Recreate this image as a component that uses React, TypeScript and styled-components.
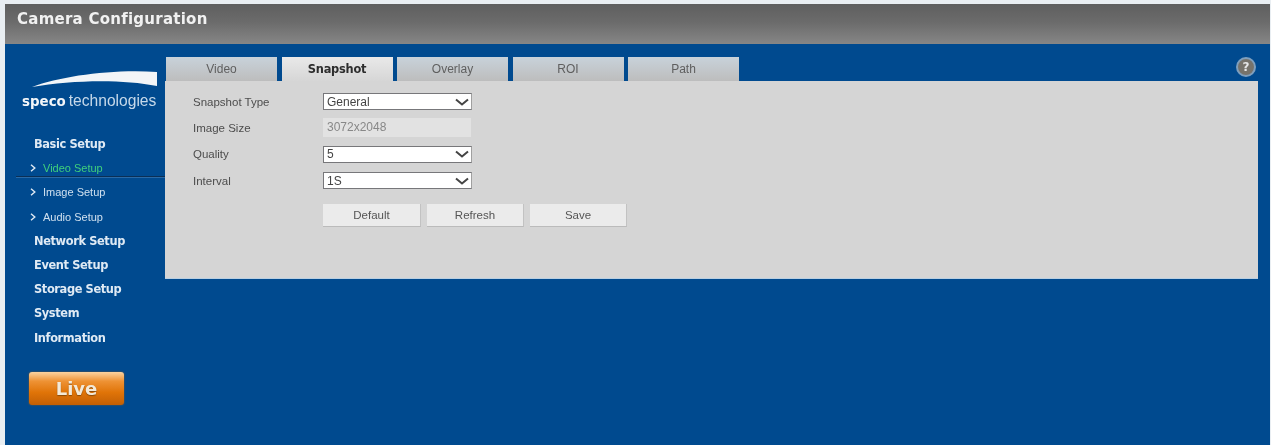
import React from "react";
import styled, { createGlobalStyle } from "styled-components";

const GlobalStyle = createGlobalStyle`
  html, body {
    margin: 0;
    padding: 0;
    background: #e9eef2;
    overflow: hidden;
  }
`;

const Page = styled.div`
  width: 1271px;
  height: 445px;
  box-sizing: border-box;
  padding: 4px 1px 0 5px;
  display: flex;
  flex-direction: column;
  font-family: "Liberation Sans", Arial, sans-serif;
  filter: blur(0.6px);
`;

const Header = styled.header`
  height: 40px;
  flex: none;
  box-sizing: border-box;
  padding: 3px 0 0 12px;
  background: linear-gradient(#5f5f5f 0%, #6b6b6b 45%, #868686 100%);
  color: #f1f1f1;
  font-family: "DejaVu Sans", Verdana, sans-serif;
  font-weight: 700;
  font-size: 15px;
  letter-spacing: 0.25px;
  line-height: 24px;
`;

const Body = styled.div`
  flex: 1;
  display: flex;
  background: #004a8f;
  position: relative;
`;

const Sidebar = styled.aside`
  width: 160px;
  flex: none;
  display: flex;
  flex-direction: column;
  padding-top: 24px;
`;

const Logo = styled.div`
  height: 64px;
  padding-left: 17px;
  display: flex;
  flex-direction: column;
`;

const LogoSwoosh = styled.svg`
  display: block;
  width: 140px;
  height: 25px;
`;

const LogoText = styled.div`
  color: #c6d9ea;
  font-size: 15.6px;
  line-height: 18px;
  margin-top: -1px;
  white-space: nowrap;
  b {
    font-family: "DejaVu Sans", sans-serif;
    font-size: 13.4px;
    margin-right: 3px;
    color: #f3f6f9;
  }
`;

const Nav = styled.nav`
  display: flex;
  flex-direction: column;
`;

const MainItem = styled.div`
  height: 24.2px;
  line-height: 24px;
  padding-left: 29px;
  color: #dfeaf4;
  font-family: "DejaVu Sans", Verdana, sans-serif;
  font-weight: 700;
  font-size: 11.4px;
  letter-spacing: -0.38px;
  white-space: nowrap;
`;

const SubItem = styled.div<{ $active?: boolean }>`
  height: 24.2px;
  display: flex;
  align-items: center;
  gap: 7px;
  padding-left: 25px;
  font-size: 11px;
  color: ${({ $active }) => ($active ? "#3fd07c" : "#cfe0ef")};
  svg {
    flex: none;
    color: #dfeaf4;
  }
`;

const NavDivider = styled.div`
  height: 1px;
  margin: -4px 0 3px 11px;
  background: #0b2f55;
  box-shadow: 0 1px 0 #2a6aa6;
`;

const LiveButton = styled.button`
  width: 95px;
  height: 33px;
  margin: 22px 0 0 24px;
  padding: 0;
  border: none;
  border-radius: 3px;
  background: linear-gradient(#fbd3a0 0%, #ee9234 28%, #e07408 62%, #c25f05 100%);
  box-shadow: 0 0 2px #8f5a1e;
  color: #f3e9d8;
  font-family: "DejaVu Sans", Verdana, sans-serif;
  font-weight: 700;
  font-size: 18px;
  text-shadow: 0 1px 1px #8a4a08;
`;

const Main = styled.main`
  width: 1093px;
  padding-top: 13px;
  display: flex;
  flex-direction: column;
`;

const Tabs = styled.div`
  display: flex;
  gap: 4.5px;
  padding-left: 1px;
  height: 24px;
`;

const Tab = styled.div<{ $active?: boolean }>`
  width: 111px;
  text-align: center;
  line-height: 24px;
  box-sizing: border-box;
  font-size: ${({ $active }) => ($active ? "11.4px" : "12px")};
  letter-spacing: ${({ $active }) => ($active ? "-0.25px" : "0")};
  font-family: ${({ $active }) =>
    $active ? '"DejaVu Sans", Verdana, sans-serif' : '"Liberation Sans", Arial, sans-serif'};
  font-weight: ${({ $active }) => ($active ? 700 : 400)};
  color: ${({ $active }) => ($active ? "#2e2e2e" : "#5f5f5f")};
  background: ${({ $active }) =>
    $active ? "linear-gradient(#e9e9e9, #d6d6d6)" : "linear-gradient(#c8d2da, #bdbdbd)"};
`;

const Panel = styled.section`
  height: 198px;
  box-sizing: border-box;
  padding: 7.5px 0 0 28px;
  background: #d5d5d5;
  border-bottom: 1px solid #b9cfe2;
`;

const FormRow = styled.div`
  height: 26.3px;
  display: flex;
  align-items: center;
`;

const Label = styled.div`
  width: 130px;
  font-size: 11.5px;
  color: #4d4d4d;
`;

const SelectBox = styled.div`
  width: 149px;
  height: 17px;
  box-sizing: border-box;
  padding: 0 2px 0 3px;
  display: flex;
  align-items: center;
  justify-content: space-between;
  background: #fff;
  border: 1px solid #77777a;
  border-right-color: #a0a0a0;
  font-size: 12px;
  color: #444;
`;

const ReadonlyBox = styled.div`
  width: 148px;
  height: 19px;
  box-sizing: border-box;
  padding-left: 4px;
  line-height: 19px;
  background: #e2e2e2;
  font-size: 12px;
  color: #888;
`;

const ButtonRow = styled.div`
  display: flex;
  gap: 6px;
  margin: 10px 0 0 130px;
`;

const ActionButton = styled.button<{ $width: number }>`
  width: ${({ $width }) => $width}px;
  height: 23px;
  padding: 0;
  border: none;
  border-bottom: 1px solid #bbb;
  border-right: 1px solid #c2c2c2;
  background: #ebebeb;
  font-family: "Liberation Sans", Arial, sans-serif;
  font-size: 11.5px;
  color: #555;
`;

const HelpIcon = styled.div`
  position: absolute;
  right: 14px;
  top: 13px;
  width: 20px;
  height: 20px;
  box-sizing: border-box;
  border-radius: 50%;
  border: 2px solid #7f9fbd;
  background: #77736b;
  color: #e6e6e6;
  font-family: "DejaVu Sans", sans-serif;
  font-weight: 700;
  font-size: 12px;
  line-height: 16px;
  text-align: center;
`;

const Chevron = () => (
  <svg width="14" height="8" viewBox="0 0 14 8">
    <path d="M1 1.5 L7 6.5 L13 1.5" fill="none" stroke="#444" strokeWidth="2" />
  </svg>
);

const SubArrow = () => (
  <svg width="6" height="8" viewBox="0 0 6 8">
    <path d="M1 0.8 L4.8 4 L1 7.2" fill="none" stroke="currentColor" strokeWidth="1.4" />
  </svg>
);

const tabs = ["Video", "Snapshot", "Overlay", "ROI", "Path"];

const App: React.FC = () => (
  <>
    <GlobalStyle />
    <Page>
      <Header>Camera Configuration</Header>
      <Body>
        <Sidebar>
          <Logo>
            <LogoSwoosh viewBox="0 0 140 25">
              <path d="M10 19 C40 8 90 1 135 4 L135 18 C100 11 50 12 10 19 Z" fill="#f2f5f8" />
            </LogoSwoosh>
            <LogoText>
              <b>speco</b>technologies
            </LogoText>
          </Logo>
          <Nav>
            <MainItem>Basic Setup</MainItem>
            <SubItem $active>
              <SubArrow />
              Video Setup
            </SubItem>
            <NavDivider />
            <SubItem>
              <SubArrow />
              Image Setup
            </SubItem>
            <SubItem>
              <SubArrow />
              Audio Setup
            </SubItem>
            <MainItem>Network Setup</MainItem>
            <MainItem>Event Setup</MainItem>
            <MainItem>Storage Setup</MainItem>
            <MainItem>System</MainItem>
            <MainItem>Information</MainItem>
          </Nav>
          <LiveButton>Live</LiveButton>
        </Sidebar>
        <Main>
          <Tabs>
            {tabs.map((t) => (
              <Tab key={t} $active={t === "Snapshot"}>
                {t}
              </Tab>
            ))}
          </Tabs>
          <Panel>
            <FormRow>
              <Label>Snapshot Type</Label>
              <SelectBox>
                General
                <Chevron />
              </SelectBox>
            </FormRow>
            <FormRow>
              <Label>Image Size</Label>
              <ReadonlyBox>3072x2048</ReadonlyBox>
            </FormRow>
            <FormRow>
              <Label>Quality</Label>
              <SelectBox>
                5
                <Chevron />
              </SelectBox>
            </FormRow>
            <FormRow>
              <Label>Interval</Label>
              <SelectBox>
                1S
                <Chevron />
              </SelectBox>
            </FormRow>
            <ButtonRow>
              <ActionButton $width={98}>Default</ActionButton>
              <ActionButton $width={97}>Refresh</ActionButton>
              <ActionButton $width={97}>Save</ActionButton>
            </ButtonRow>
          </Panel>
        </Main>
        <HelpIcon>?</HelpIcon>
      </Body>
    </Page>
  </>
);

export default App;
